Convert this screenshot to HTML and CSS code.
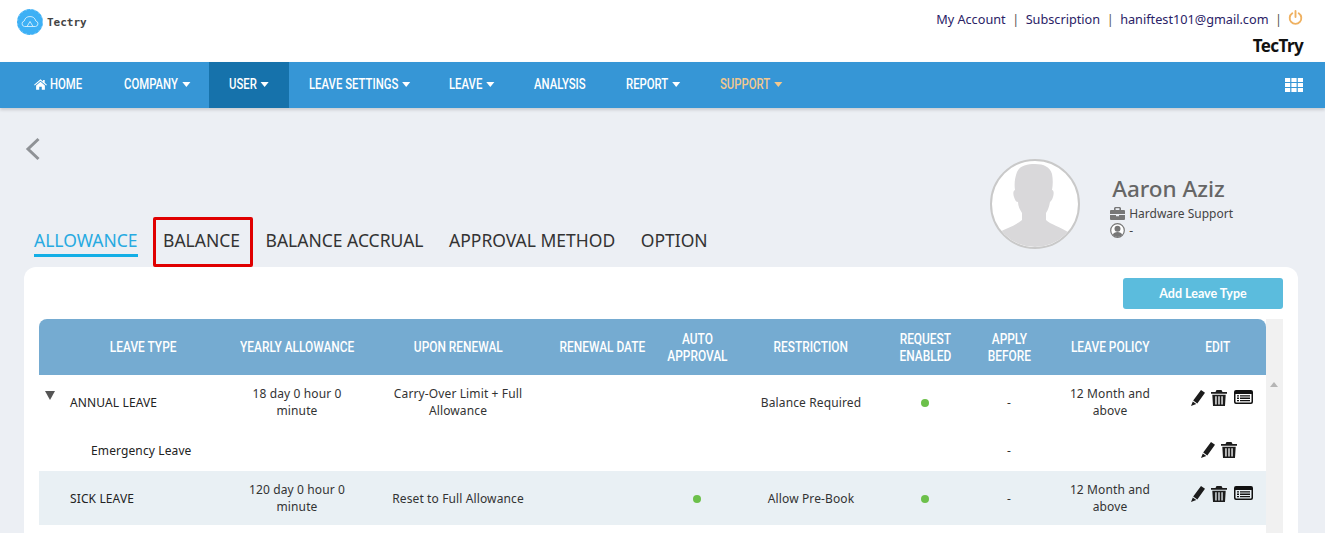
FILE: index.html
```html
<!DOCTYPE html>
<html lang="en">
<head>
<meta charset="utf-8">
<title>TecTry</title>
<link rel="stylesheet" href="styles.css">
</head>
<body>
<header class="top">
  <div class="logo">
    <svg class="logo-mark" viewBox="0 0 26 26" width="26" height="26"><circle cx="13" cy="13" r="13" fill="#3db0f5"/><circle cx="13" cy="13" r="12.500" fill="none" stroke="#cdeafc" stroke-width=".6" stroke-dasharray="1.500 3"/><path d="M7.500 17.500a2.800 2.800 0 0 1-.3-5.500A6 6 0 0 1 18.800 12a2.800 2.800 0 0 1-.3 5.500zM10 17.500l3-5 3 5" fill="none" stroke="#d7effd" stroke-width=".9"/></svg>
    <span class="logo-text">Tectry</span>
  </div>
  <div class="account">
    <div class="account-links">
      <a>My Account</a><i>|</i><a>Subscription</a><i>|</i><a>haniftest101@gmail.com</a><i>|</i>
      <svg class="power" viewBox="0 0 16 16" width="15" height="15"><path d="M4.600 3.400a6.200 6.200 0 1 0 6.800 0" fill="none" stroke="#efb161" stroke-width="2" stroke-linecap="round"/><path d="M8 1v6.400" stroke="#efb161" stroke-width="2" stroke-linecap="round"/></svg>
    </div>
    <div class="company">TecTry</div>
  </div>
</header>

<nav class="nav">
  <a class="nav-item"><svg class="home" viewBox="0 0 14 12" width="13" height="11"><path fill="#fff" d="M7 .3 0 6.200l.7.8L7 1.800 13.300 7l.7-.8-2.400-2V1h-1.800v1.700zM2.200 7v4.800h3.400V8.400h2.800v3.400h3.400V7L7 3z"/></svg><span class="label">HOME</span></a>
  <a class="nav-item"><span class="label caret">COMPANY</span></a>
  <a class="nav-item active"><span class="label caret">USER</span></a>
  <a class="nav-item"><span class="label caret">LEAVE SETTINGS</span></a>
  <a class="nav-item"><span class="label caret">LEAVE</span></a>
  <a class="nav-item"><span class="label">ANALYSIS</span></a>
  <a class="nav-item"><span class="label caret">REPORT</span></a>
  <a class="nav-item support"><span class="label caret">SUPPORT</span></a>
  <svg class="grid" viewBox="0 0 18 14" width="18" height="14"><path fill="#fff" d="M0 0h5.200v4H0zM6.400 0h5.200v4H6.400zM12.800 0H18v4h-5.200zM0 5h5.200v4H0zM6.400 5h5.200v4H6.400zM12.800 5H18v4h-5.200zM0 10h5.200v4H0zM6.400 10h5.200v4H6.400zM12.800 10H18v4h-5.200z"/></svg>
</nav>

<main class="page">
  <svg class="back" viewBox="0 0 16 24" width="16" height="24"><path d="M13.500 2 3 12l10.500 10" fill="none" stroke="#8f9296" stroke-width="3"/></svg>
  <div class="head-row">
    <div class="tabs">
      <a class="tab current">ALLOWANCE</a>
      <a class="tab boxed">BALANCE</a>
      <a class="tab">BALANCE ACCRUAL</a>
      <a class="tab">APPROVAL METHOD</a>
      <a class="tab">OPTION</a>
    </div>
    <div class="profile">
      <div class="avatar">
        <svg viewBox="0 0 86 86" width="86" height="86"><path fill="#d9d8da" d="M25 11c3-7 11-8 18-8 9 0 15 3 17 10 1 5 1 11 0 16 2 0 2 4 1 7-1 3-2 4-3 5-1 5-2 8-4 11v7c4 4 14 7 24 13-8 9-20 14-35 14-14 0-27-5-37-14 8-5 17-7 24-13v-7c-2-3-4-7-4-11-2 0-3-2-4-5-1-3-1-6 1-7-1-6 0-13 2-18z"/></svg>
      </div>
      <div class="who">
        <div class="name">Aaron Aziz</div>
        <div class="meta"><svg viewBox="0 0 15 13" width="15" height="13"><path fill="#777" d="M5 0h5l1 1v2h3a1 1 0 0 1 1 1v3H0V4a1 1 0 0 1 1-1h3V1zm.6 1.200V3h3.800V1.200zM0 8h6v1.300h3V8h6v4a1 1 0 0 1-1 1H1a1 1 0 0 1-1-1z"/></svg>Hardware Support</div>
        <div class="meta"><svg viewBox="0 0 15 15" width="15" height="15"><circle cx="7.500" cy="7.500" r="6.800" fill="#fff" stroke="#777" stroke-width="1.200"/><circle cx="7.500" cy="5.800" r="3" fill="#777"/><path fill="#777" d="M2.800 12c.6-2.200 2.400-3 4.700-3s4.100.8 4.700 3a6.500 6.500 0 0 1-9.400 0z"/></svg>-</div>
      </div>
    </div>
  </div>

  <section class="card">
    <div class="actions"><button class="add">Add Leave Type</button></div>
    <div class="table-wrap">
      <table class="leave">
        <colgroup>
          <col class="c1"><col class="c2"><col class="c3"><col class="c4"><col class="c5"><col class="c6"><col class="c7"><col class="c8"><col class="c9"><col class="c10">
        </colgroup>
        <thead>
          <tr>
            <th class="th-type"><span>LEAVE TYPE</span></th><th><span>YEARLY ALLOWANCE</span></th><th><span>UPON RENEWAL</span></th><th><span>RENEWAL DATE</span></th><th><span>AUTO<br>APPROVAL</span></th><th><span>RESTRICTION</span></th><th><span>REQUEST<br>ENABLED</span></th><th><span>APPLY<br>BEFORE</span></th><th><span>LEAVE POLICY</span></th><th><span>EDIT</span></th>
          </tr>
        </thead>
        <tbody>
          <tr class="r-main">
            <td class="type"><span class="tri"></span>ANNUAL LEAVE</td>
            <td>18 day 0 hour 0<br>minute</td>
            <td>Carry-Over Limit + Full<br>Allowance</td>
            <td></td><td></td>
            <td>Balance Required</td>
            <td><span class="dot"></span></td>
            <td>-</td>
            <td>12 Month and<br>above</td>
            <td class="edit">
              <svg class="ic" viewBox="0 0 14 16" width="14" height="16"><use href="#pencil"/></svg><svg class="ic" viewBox="0 0 16 16" width="16" height="16"><use href="#trash"/></svg><svg class="ic list" viewBox="0 0 19 14" width="19" height="14"><use href="#list"/></svg>
            </td>
          </tr>
          <tr class="r-sub">
            <td class="type sub">Emergency Leave</td>
            <td></td><td></td><td></td><td></td><td></td><td></td>
            <td>-</td>
            <td></td>
            <td class="edit edit-sub">
              <svg class="ic" viewBox="0 0 14 16" width="14" height="16"><use href="#pencil"/></svg><svg class="ic" viewBox="0 0 16 16" width="16" height="16"><use href="#trash"/></svg>
            </td>
          </tr>
          <tr class="r-main alt">
            <td class="type">SICK LEAVE</td>
            <td>120 day 0 hour 0<br>minute</td>
            <td>Reset to Full Allowance</td>
            <td></td>
            <td><span class="dot"></span></td>
            <td>Allow Pre-Book</td>
            <td><span class="dot"></span></td>
            <td>-</td>
            <td>12 Month and<br>above</td>
            <td class="edit">
              <svg class="ic" viewBox="0 0 14 16" width="14" height="16"><use href="#pencil"/></svg><svg class="ic" viewBox="0 0 16 16" width="16" height="16"><use href="#trash"/></svg><svg class="ic list" viewBox="0 0 19 14" width="19" height="14"><use href="#list"/></svg>
            </td>
          </tr>
        </tbody>
      </table>
      <div class="scroll"><span class="scroll-up"></span></div>
    </div>
  </section>
</main>

<svg class="defs" width="0" height="0">
  <defs>
    <path id="pencil" fill="#1c1c1c" d="M10 0 14 2.800 6.300 13.500 2.200 10.600zM1.800 11.600l3.500 2.500L0 16z"/>
    <path id="trash" fill="#1c1c1c" d="M5.500 0h5l1 2H16v1.800H0V2h4.500zM1.300 4.700h13.400L14 16H2zM4.300 6.200v8.300h1.300V6.200zM7.350 6.200v8.300h1.300V6.200zM10.400 6.200v8.300h1.300V6.200z"/>
    <path id="list" fill="#111" fill-rule="evenodd" d="M2 0h15a2 2 0 0 1 2 2v10a2 2 0 0 1-2 2H2a2 2 0 0 1-2-2V2a2 2 0 0 1 2-2zM1.500 4v7.500c0 .5.300 1 1 1h14c.7 0 1-.5 1-1V4zM3 5.300h2v1.300H3zM6 5.300h10v1.300H6zM3 7.600h2v1.300H3zM6 7.600h10v1.300H6zM3 9.900h2v1.300H3zM6 9.900h10v1.300H6z"/>
  </defs>
</svg>
</body>
</html>
```
FILE: styles.css
```css
* { box-sizing: border-box; }
*::before, *::after { box-sizing: border-box; }
html, body { margin: 0; height: 533px; overflow: hidden; }
body { background: #eceff4; font-family: "Noto Sans", "Liberation Sans", sans-serif; color: #333; }

.top { height: 62px; background: #fff; display: flex; justify-content: space-between; padding: 8px 22px 0 17px; }
.logo { display: flex; align-items: flex-start; gap: 4px; padding-top: 1px; }
.logo-text { font: bold 11px/1 "DejaVu Sans Mono", monospace; color: #444; margin-top: 8px; }
.account { text-align: right; }
.account-links { display: flex; align-items: center; justify-content: flex-end; height: 22px; font-size: 12.700px; color: #2a2266; }
.account-links i { font-style: normal; color: #555; margin: 0 6.500px; }
.account-links i:last-of-type { margin-right: 6px; }
.power { margin-top: -4px; }
.company { font: bold 17px/20px "Noto Sans", sans-serif; color: #111; margin-top: 6px; letter-spacing: -.6px; }

.nav { height: 46px; background: #3696d6; display: flex; align-items: stretch; position: relative; padding-left: 14px; box-shadow: 0 2px 3px rgba(0,0,0,.15); }
.nav-item { flex: none; display: flex; align-items: center; padding: 0 0 2px 20px; color: #fff; font: 500 14px Roboto, sans-serif; }
.nav-item:nth-child(1) { width: 90px; }
.nav-item:nth-child(2) { width: 105px; }
.nav-item:nth-child(3) { width: 80px; }
.nav-item:nth-child(4) { width: 140px; }
.nav-item:nth-child(5) { width: 85px; }
.nav-item:nth-child(6) { width: 92px; }
.nav-item:nth-child(7) { width: 94px; }
.nav-item:nth-child(8) { width: 102px; }
.label { display: inline-flex; align-items: center; white-space: nowrap; transform: scaleX(.81); transform-origin: left center; }
.label.caret::after { content: ""; margin-left: 5px; border: 5.500px solid transparent; border-top: 5px solid currentColor; border-bottom: 0; }
.nav-item.active { background: #1672ab; }
.nav-item.support { color: #f3c88d; }
.home { margin-right: 3px; flex: none; }
.grid { position: absolute; right: 22px; top: 16px; }

.page { position: relative; padding: 0 27px 0 24px; height: 425px; }
.back { position: absolute; left: 25px; top: 29px; }
.head-row { height: 159px; display: flex; justify-content: space-between; align-items: flex-start; }
.tabs { display: flex; align-items: flex-start; margin-top: 120px; padding-left: 10px; }
.tab { font-size: 17.500px; line-height: 24px; color: #333; margin-right: 25.500px; white-space: nowrap; }
.tab.current { color: #27aae1; border-bottom: 3px solid #12aee6; padding-bottom: 2px; }
.tab.boxed { position: relative; }
.tab.boxed::before { content: ""; position: absolute; left: -10px; right: -13px; top: -11px; height: 50px; border: 3px solid #e00000; border-radius: 2px; }
.profile { display: flex; margin-top: 51px; margin-right: 65px; }
.avatar { width: 90px; height: 90px; border: 2px solid #c9c9c9; border-radius: 50%; background: #fff; overflow: hidden; }
.avatar svg { display: block; }
.who { margin-left: 32px; margin-top: 14px; }
.name { font-size: 22.500px; line-height: 32px; color: #666; font-weight: 500; }
.meta { display: flex; align-items: center; gap: 4px; font-size: 12px; line-height: 17px; color: #444; margin-left: -2px; }

.card { background: #fff; border-radius: 12px 12px 0 0; height: 266px; padding: 11px 15px 0; }
.actions { display: flex; justify-content: flex-end; height: 41px; }
.add { width: 160px; height: 31px; background: #5bbcdd; border: 0; border-radius: 3px; color: #fff; font: bold 12.500px Lato, sans-serif; }
.table-wrap { display: flex; height: 214px; }
.leave { width: 1227px; table-layout: fixed; border-collapse: collapse; flex: none; align-self: flex-start; }
.c1 { width: 189px; } .c2 { width: 138px; } .c3 { width: 184px; } .c4 { width: 104px; } .c5 { width: 86px; } .c6 { width: 142px; } .c7 { width: 86px; } .c8 { width: 82px; } .c9 { width: 120px; } .c10 { width: 96px; }
.leave th { height: 56px; background: #75abd1; color: #fff; font: 500 14px/17px Roboto, sans-serif; padding: 0; text-align: center; white-space: nowrap; }
.leave th span { display: inline-block; transform: scaleX(.85); padding-top: 1px; }
.leave th:first-child { border-top-left-radius: 8px; }
.leave th:last-child { border-top-right-radius: 8px; }
.leave th.th-type { padding-left: 20px; }
.leave td { font-size: 12px; line-height: 17px; letter-spacing: .12px; text-align: center; padding: 0; color: #333; vertical-align: middle; }
.r-main { height: 54px; }
.r-sub { height: 42px; }
.alt td { background: #e9f0f4; }
.leave td.type { text-align: left; padding-left: 31px; position: relative; color: #222; }
.leave td.sub { padding-left: 52px; }
.tri { position: absolute; left: 6px; top: 16px; border: 5.500px solid transparent; border-top: 9px solid #555; border-bottom: 0; }
.dot { display: inline-block; width: 8px; height: 8px; border-radius: 50%; background: #6cc04a; }
.leave td.edit { white-space: nowrap; padding-left: 8px; }
.edit .ic { margin-right: 6px; vertical-align: top; }
.edit .ic.list { margin-left: 1px; margin-right: 0; }
.edit-sub .ic:last-child { margin-right: 0; }
.leave td.edit-sub { padding-left: 2px; padding-top: 1px; }
.r-main .edit { padding-bottom: 7px; }
.scroll { width: 17px; background: #f1f1f1; position: relative; }
.scroll-up { position: absolute; left: 4px; top: 63px; border: 4.500px solid transparent; border-top: 0; border-bottom: 5px solid #b5b5b5; }
.defs { position: absolute; }
```
